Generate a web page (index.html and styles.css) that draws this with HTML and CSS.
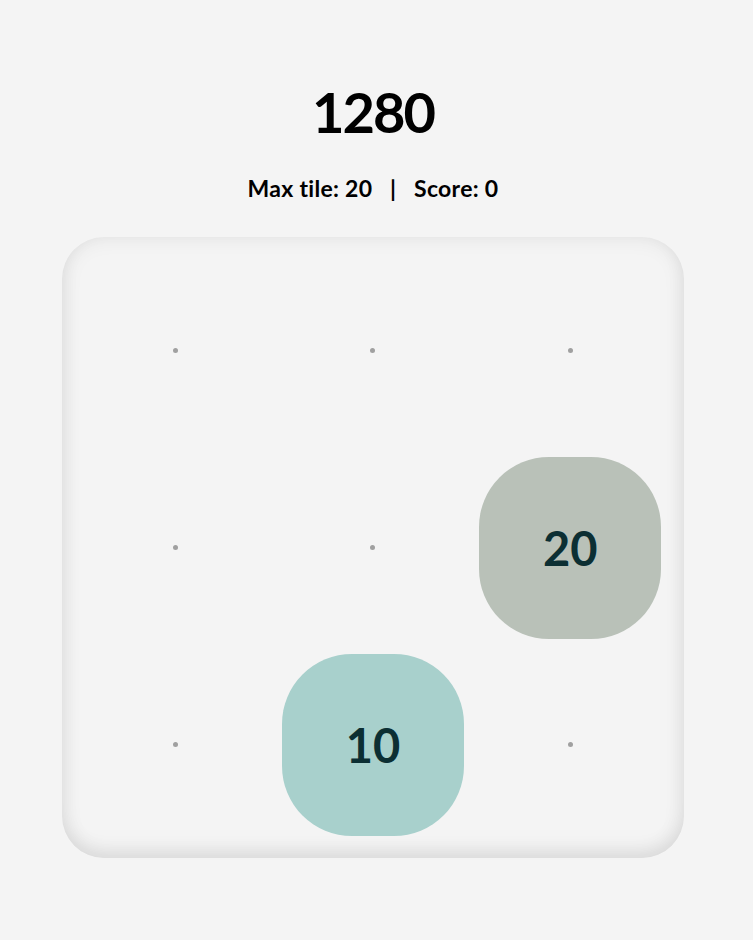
FILE: index.html
```html
<!DOCTYPE html>
<html>
<head>
<meta charset="utf-8">
<link rel="stylesheet" href="styles.css">
</head>
<body>
<main class="game">
  <h1 class="target">1280</h1>
  <p class="stats">Max tile: 20   |   Score: 0</p>
  <div class="board">
    <div class="cell"><span class="dot"></span></div>
    <div class="cell"><span class="dot"></span></div>
    <div class="cell"><span class="dot"></span></div>
    <div class="cell"><span class="dot"></span></div>
    <div class="cell"><span class="dot"></span></div>
    <div class="cell"><div class="tile tile-20">20</div></div>
    <div class="cell"><span class="dot"></span></div>
    <div class="cell"><div class="tile tile-10">10</div></div>
    <div class="cell"><span class="dot"></span></div>
  </div>
</main>
</body>
</html>
```

FILE: styles.css
```css
html, body {
  margin: 0;
  padding: 0;
  background: #f4f4f4;
}
body {
  font-family: "Lato", "Noto Sans", "DejaVu Sans", sans-serif;
  color: #000;
}
.game {
  width: 746px;
  display: flex;
  flex-direction: column;
  align-items: center;
  padding-top: 80px;
}
.target {
  margin: 0;
  font-size: 56px;
  font-weight: 700;
  line-height: 64px;
  letter-spacing: -2px;
}
.stats {
  margin: 30px 0 0;
  font-size: 23px;
  font-weight: 700;
  line-height: 28px;
  letter-spacing: 0.3px;
  white-space: pre;
}
.board {
  margin-top: 35px;
  width: 622px;
  height: 621px;
  box-sizing: border-box;
  padding: 15px;
  border-radius: 42px;
  background: #f4f4f4;
  box-shadow: inset 0 -8px 18px rgba(0,0,0,0.07), inset 0 0 22px rgba(0,0,0,0.07);
  display: grid;
  grid-template-columns: repeat(3, 1fr);
  grid-template-rows: repeat(3, 1fr);
}
.cell {
  display: flex;
  align-items: center;
  justify-content: center;
}
.dot {
  width: 5px;
  height: 5px;
  border-radius: 50%;
  background: #a0a0a0;
}
.tile {
  width: 182px;
  height: 182px;
  border-radius: 70px;
  display: flex;
  align-items: center;
  justify-content: center;
  font-size: 47px;
  font-weight: 700;
  color: #0c2f33;
}
.tile-10 { background: #a8d0cc; }
.tile-20 { background: #b9c1b8; }
```
